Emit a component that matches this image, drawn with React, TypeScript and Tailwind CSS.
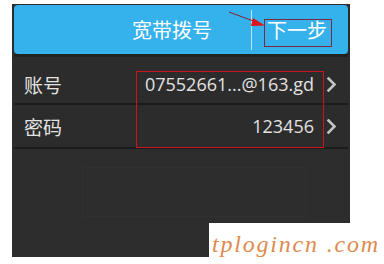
import React from "react";

const cjk = '"Noto Sans CJK SC", "Noto Sans", sans-serif';
const latin = '"Open Sans", "Noto Sans CJK SC", sans-serif';

function Chevron() {
  return (
    <svg width="11" height="15" viewBox="0 0 11 15" className="shrink-0">
      <path d="M2.5 1.5 L8.5 7.5 L2.5 13.5" fill="none" stroke="#c4c4c4" strokeWidth="2.6" strokeLinecap="square" />
    </svg>
  );
}

export default function App() {
  return (
    <div className="relative w-[384px] h-[264px] bg-white overflow-hidden">
      <div className="ml-[12px] mt-[4px] w-[338px] h-[253px] bg-[#2c2c2c] pt-px px-[2px] flex flex-col">
        {/* header */}
        <div className="h-[49px] rounded-[4px] bg-[#35b1ec] flex items-center shrink-0">
          <span className="ml-[118px] text-[20px] leading-none text-white" style={{ fontFamily: cjk }}>
            宽带拨号
          </span>
          <div className="ml-[39px] w-px h-[40px] bg-[#bfe6f8]" />
          <span className="ml-[15px] text-[20px] leading-none text-white" style={{ fontFamily: cjk }}>
            下一步
          </span>
        </div>
        <div className="h-[3px] bg-[#222] shrink-0" />
        {/* row 1 */}
        <div className="h-[48px] pt-[8px] flex items-center border-b-2 border-[#1c1c1c] pl-[10px] pr-[11px] shrink-0">
          <span className="text-[19px] leading-none text-[#e2e2e2]" style={{ fontFamily: cjk }}>账号</span>
          <span className="ml-auto text-[18px] leading-none text-[#e2e2e2]" style={{ fontFamily: latin }}>
            07552661...@163.gd
          </span>
          <span className="ml-[12px]"><Chevron /></span>
        </div>
        {/* row 2 */}
        <div className="h-[44px] flex items-center border-b-2 border-[#1c1c1c] pl-[10px] pr-[11px] shrink-0">
          <span className="text-[19px] leading-none text-[#e2e2e2]" style={{ fontFamily: cjk }}>密码</span>
          <span className="ml-auto text-[18px] leading-none text-[#e2e2e2]" style={{ fontFamily: latin }}>
            123456
          </span>
          <span className="ml-[12px]"><Chevron /></span>
        </div>
        <div className="flex-1 bg-[#2d2d2d] pt-[18px] pl-[68px]">
          <div className="w-[224px] h-[50px] border border-[#303030]" />
        </div>
      </div>

      {/* annotation: red box around values */}
      <div className="absolute left-[136px] top-[71px] w-[188px] h-[77px] border border-[#c8141c]" />
      {/* annotation: red box around next step */}
      <div className="absolute left-[264px] top-[19px] w-[68px] h-[28px] border border-[#7a2a45]" />
      {/* annotation: arrow */}
      <svg className="absolute left-0 top-0" width="384" height="60" viewBox="0 0 384 60">
        <line x1="229" y1="12" x2="256" y2="22" stroke="#8a1f35" strokeWidth="1" />
        <polygon points="265,25.5 253,18 251,26" fill="#e0141c" />
      </svg>

      {/* watermark */}
      <div className="absolute left-[209px] top-[223px] w-[175px] h-[41px] bg-white flex items-center pl-[3px]">
        <span
          className="text-[24px] italic leading-none text-[#e08a4e] tracking-[1.8px] whitespace-pre"
          style={{ fontFamily: '"Liberation Serif", serif' }}
        >
          tplogincn .com
        </span>
      </div>
    </div>
  );
}
